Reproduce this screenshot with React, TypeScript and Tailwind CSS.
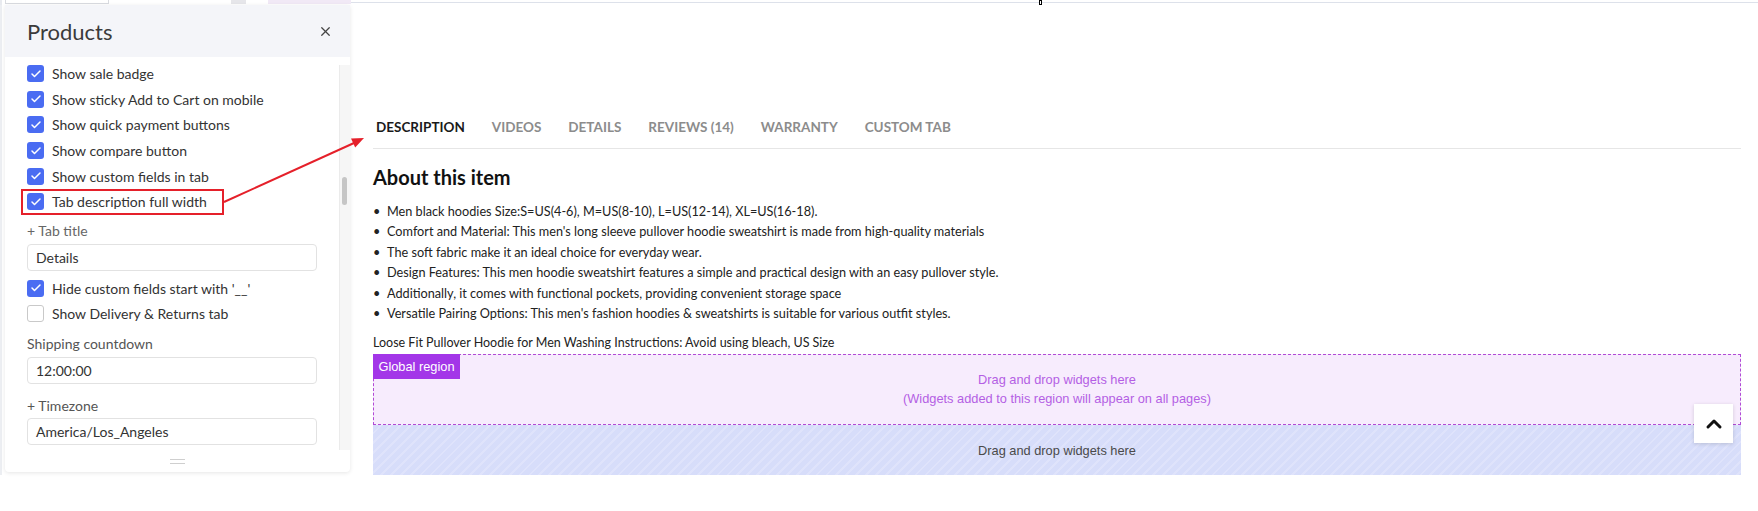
import { Check, ChevronUp, X } from "lucide-react";

const TOP_OPTIONS = [
  "Show sale badge",
  "Show sticky Add to Cart on mobile",
  "Show quick payment buttons",
  "Show compare button",
  "Show custom fields in tab",
  "Tab description full width",
];

const TABS = ["DESCRIPTION", "VIDEOS", "DETAILS", "REVIEWS (14)", "WARRANTY", "CUSTOM TAB"];

const BULLETS = [
  "Men black hoodies Size:S=US(4-6), M=US(8-10), L=US(12-14), XL=US(16-18).",
  "Comfort and Material: This men's long sleeve pullover hoodie sweatshirt is made from high-quality materials",
  "The soft fabric make it an ideal choice for everyday wear.",
  "Design Features: This men hoodie sweatshirt features a simple and practical design with an easy pullover style.",
  "Additionally, it comes with functional pockets, providing convenient storage space",
  "Versatile Pairing Options: This men's fashion hoodies & sweatshirts is suitable for various outfit styles.",
];

function CheckRow({ label, checked = true }: { label: string; checked?: boolean }) {
  return (
    <div className="h-[25.6px] flex items-center gap-[8px]">
      {checked ? (
        <span className="w-[17px] h-[17px] rounded-[3px] bg-[#4a6cf2] flex items-center justify-center shrink-0">
          <Check size={12} strokeWidth={3} color="#ffffff" />
        </span>
      ) : (
        <span className="w-[17px] h-[17px] rounded-[3px] bg-white border border-[#c9c9c9] shrink-0" />
      )}
      <span className="text-[14px] text-[#333]">{label}</span>
    </div>
  );
}

function Field({ value }: { value: string }) {
  return (
    <div className="h-[27px] border border-[#e2e2e2] rounded-[4px] flex items-center pl-[8px] text-[14px] text-[#333]">
      {value}
    </div>
  );
}

export default function App() {
  return (
    <div className="relative w-[1758px] h-[511px] bg-white overflow-hidden font-['Lato',sans-serif]">
      {/* page bits peeking out behind the panel */}
      <div className="h-[5px] flex items-start">
        <div className="w-[2px] h-[5px] bg-[#e8eaef]" />
        <div className="ml-[3px] w-[104px] h-[4px] border-x border-b border-[#d9dbe0] bg-white" />
        <div className="ml-[122px] w-[15px] h-[4px] bg-[#e6e6ea]" />
        <div className="ml-[22px] w-[83px] h-[4px] bg-[#f1e9f6]" />
        <div className="flex-1 mt-[2px] h-[1px] bg-[#dde1ea] relative">
          <div className="absolute left-[688px] -top-[2px] w-[3px] h-[5px] border border-black bg-white" />
        </div>
      </div>

      <div className="flex">
        <div className="w-[2px] h-[470px] bg-[#eceef2]" />

        {/* settings panel */}
        <div className="ml-[3px] w-[345px] h-[467px] bg-white rounded-b-[4px] shadow-[0_1px_4px_rgba(0,0,0,0.10)] flex flex-col">
          <div className="h-[52px] bg-[#f4f5f9] flex items-center justify-between pl-[22px] pr-[17px]">
            <span className="text-[22px] text-[#3b3b3b]">Products</span>
            <X size={15} strokeWidth={2} color="#444" />
          </div>

          <div className="flex-1 flex">
            <div className="flex-1 pl-[22px] pr-[22px] pt-[4px]">
              {TOP_OPTIONS.map((o) => (
                <CheckRow key={o} label={o} />
              ))}
              <div className="mt-[6px] h-[20px] leading-[20px] text-[14px] text-[#666]">+ Tab title</div>
              <div className="mt-[3px]">
                <Field value="Details" />
              </div>
              <div className="mt-[5px]">
                <CheckRow label="Hide custom fields start with '__'" />
                <CheckRow label="Show Delivery & Returns tab" checked={false} />
              </div>
              <div className="mt-[7px] h-[20px] leading-[20px] text-[14px] text-[#555]">Shipping countdown</div>
              <div className="mt-[3px]">
                <Field value="12:00:00" />
              </div>
              <div className="mt-[12px] h-[20px] leading-[20px] text-[14px] text-[#555]">+ Timezone</div>
              <div className="mt-[2px]">
                <Field value="America/Los_Angeles" />
              </div>
            </div>
            <div className="w-[11px] mt-[8px] bg-[#f6f6f6] border-l border-[#ebebeb]">
              <div className="mt-[112px] ml-[2px] w-[5px] h-[28px] rounded-full bg-[#c6c6c6]" />
            </div>
          </div>

          <div className="h-[22px] flex flex-col items-center justify-center gap-[3px]">
            <div className="w-[15px] h-[1px] bg-[#cfcfcf]" />
            <div className="w-[15px] h-[1px] bg-[#cfcfcf]" />
          </div>
        </div>

        {/* storefront preview */}
        <div className="ml-[23px] w-[1368px]">
          <div className="mt-[112px] pb-[11px] pl-[3px] border-b border-[#e6e6e6] flex gap-[27px] text-[13.5px] font-bold leading-[20px]">
            {TABS.map((t, i) => (
              <span key={t} className={i === 0 ? "text-[#1a1a1a]" : "text-[#8c8c8c]"}>
                {t}
              </span>
            ))}
          </div>

          <h2 className="mt-[14px] text-[20px] leading-[28px] font-bold text-[#111]">About this item</h2>

          <ul className="mt-[10px] text-[12.7px] leading-[20.4px] text-[#222]">
            {BULLETS.map((b) => (
              <li key={b} className="flex">
                <span className="w-[14px] shrink-0">•</span>
                <span>{b}</span>
              </li>
            ))}
          </ul>

          <p className="mt-[10px] text-[12.5px] leading-[20px] text-[#222]">
            Loose Fit Pullover Hoodie for Men Washing Instructions: Avoid using bleach, US Size
          </p>

          <div className="relative mt-[1px] font-['Liberation_Sans',sans-serif]">
            <div className="h-[71px] bg-[#f7ecfd] border border-dashed border-[#b14bd6] flex flex-col items-center pt-[15px] text-[12.8px] leading-[19px] text-[#b45fe4]">
              <span>Drag and drop widgets here</span>
              <span>(Widgets added to this region will appear on all pages)</span>
            </div>
            <div className="absolute left-0 top-0 h-[25px] w-[87px] bg-[#a336e8] text-white text-[12.8px] flex items-center justify-center">
              Global region
            </div>
            <div className="h-[50px] bg-[repeating-linear-gradient(135deg,#d7ddfa_0px,#d7ddfa_5px,#dfe3fb_5px,#dfe3fb_7px)] flex items-center justify-center text-[12.8px] text-[#4a4a4a]">
              Drag and drop widgets here
            </div>
            <button className="absolute left-[1321px] top-[50px] w-[39px] h-[39px] bg-white shadow-[0_1px_4px_rgba(0,0,0,0.15)] flex items-center justify-center">
              <ChevronUp size={24} strokeWidth={3} color="#111" />
            </button>
          </div>
        </div>
      </div>

      {/* annotation */}
      <svg className="absolute inset-0 pointer-events-none" width="1758" height="511">
        <rect x="22" y="190" width="201" height="24" fill="none" stroke="#e5202a" strokeWidth="2" />
        <line x1="224" y1="202" x2="354" y2="143" stroke="#e5202a" strokeWidth="2" />
        <polygon points="364,138 355.2,147.5 351,138.5" fill="#e5202a" />
      </svg>
    </div>
  );
}
